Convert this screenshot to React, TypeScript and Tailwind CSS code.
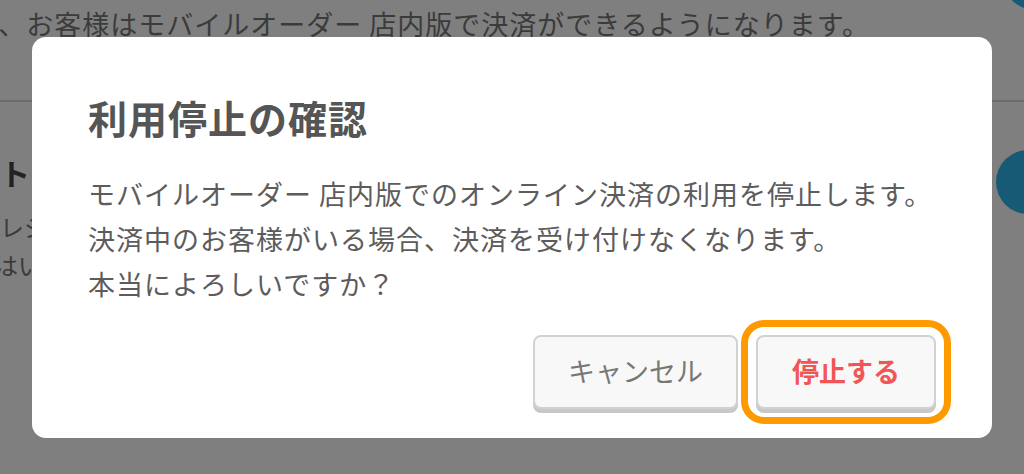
import React from "react";

const jp = { fontFamily: '"Noto Sans CJK JP", "Noto Sans", sans-serif' };

const BackgroundPage = () => {
  return (
    <div className="w-[1024px] h-[474px] overflow-hidden bg-white flex flex-col text-[#777]">
      <div className="flex items-start h-[100px]">
        <p className="ml-[-29px] mt-[4px] text-[27px] leading-[40px] tracking-[1px] whitespace-nowrap flex-1">
          に、お客様はモバイルオーダー 店内版で決済ができるようになります。
        </p>
        <div className="w-[64px] h-[64px] rounded-full bg-[#2eb4ea] shrink-0 mt-[-54px] mr-[-43px]"></div>
      </div>
      <div className="h-[2px] bg-[#d6d6d6]"></div>
      <div className="flex items-start">
        <div className="flex-1 flex flex-col">
          <p className="mt-[50px] text-[30px] leading-[40px] font-bold text-[#444] whitespace-nowrap">
            ト
          </p>
          <p className="mt-[16px] text-[24px] leading-[38px] whitespace-nowrap">
            レジ
          </p>
          <p className="ml-[-6px] text-[24px] leading-[38px] whitespace-nowrap">
            はい
          </p>
        </div>
        <div className="w-[64px] h-[64px] rounded-full bg-[#2eb4ea] shrink-0 mt-[48px] mr-[-36px]"></div>
      </div>
    </div>
  );
};

const ConfirmDialog = () => {
  return (
    <div className="fixed inset-0 bg-black/50 flex items-center justify-center">
      <div className="w-[960px] bg-white rounded-[14px] pt-[52px] px-[56px] pb-[29px] flex flex-col">
        <h2 className="text-[39px] leading-[56px] font-bold tracking-[1px] text-[#555]">
          利用停止の確認
        </h2>
        <div className="mt-[26px] text-[27px] leading-[45px] tracking-[1px] text-[#5c5c5c]">
          <p>モバイルオーダー 店内版でのオンライン決済の利用を停止します。</p>
          <p>決済中のお客様がいる場合、決済を受け付けなくなります。</p>
          <p>本当によろしいですか？</p>
        </div>
        <div className="mt-[29px] flex justify-end gap-[18px]">
          <button className="w-[205px] h-[74px] rounded-[8px] bg-[#f8f8f8] border-2 border-[#d2d2d2] shadow-[0_4px_0_#c8c8c8] text-[27px] text-[#777]">
            キャンセル
          </button>
          <button className="w-[180px] h-[74px] rounded-[8px] bg-[#f8f8f8] border-2 border-[#d2d2d2] shadow-[0_4px_0_#c8c8c8] text-[27px] font-bold text-[#f25555] outline-solid outline-[7px] outline-offset-[8px] outline-[#ff9900]">
            停止する
          </button>
        </div>
      </div>
    </div>
  );
};

export default function App() {
  return (
    <div style={jp} className="relative w-[1024px] h-[474px] overflow-hidden">
      <BackgroundPage />
      <ConfirmDialog />
    </div>
  );
}
